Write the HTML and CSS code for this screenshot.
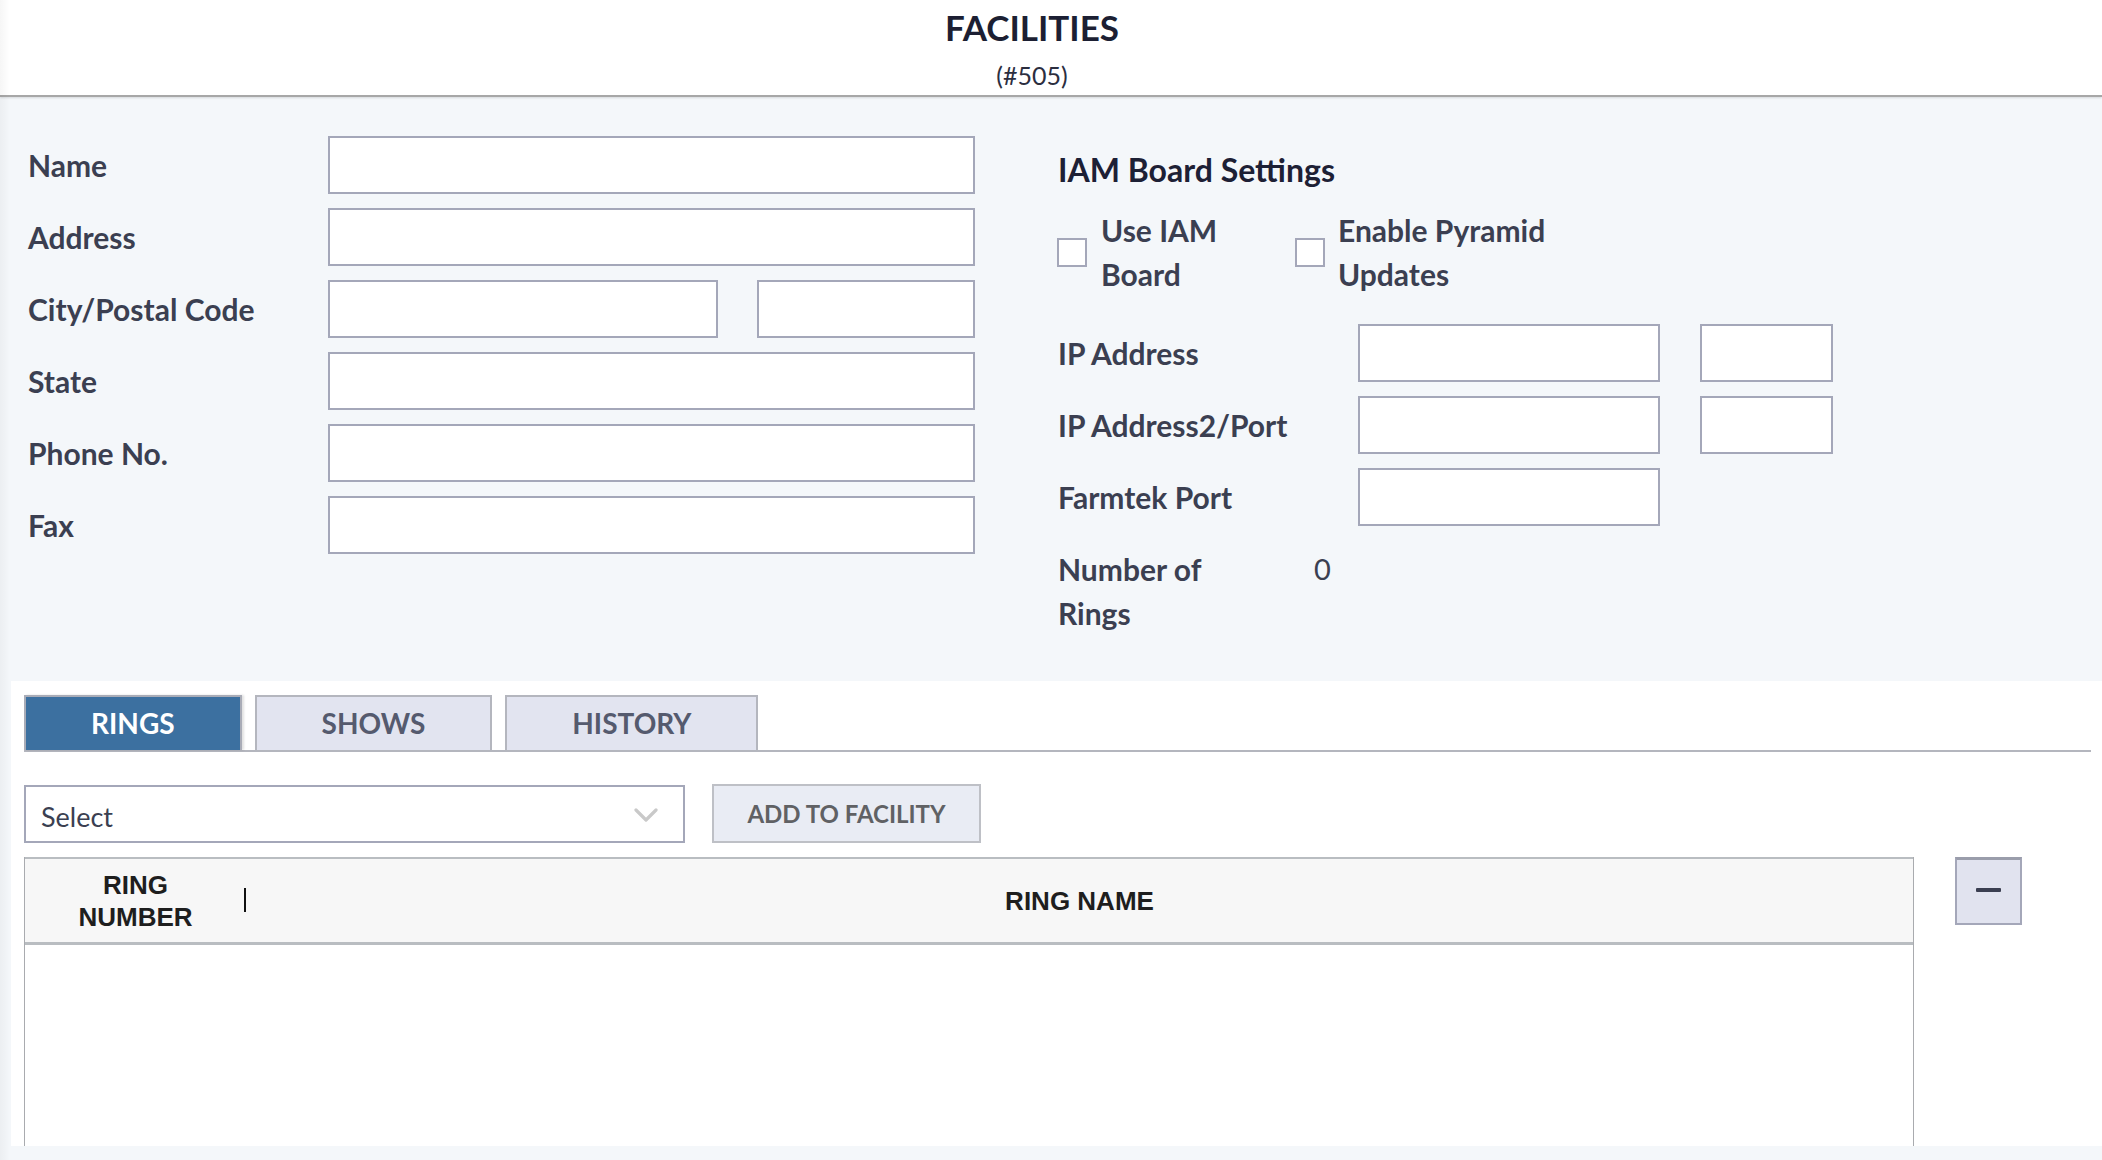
FILE: index.html
```html
<!DOCTYPE html>
<html lang="en">
<head>
<meta charset="utf-8">
<title>Facilities</title>
<link rel="stylesheet" href="styles.css">
</head>
<body>
<header class="page-head">
  <h1 class="page-title">FACILITIES</h1>
  <div class="page-sub">(#505)</div>
</header>

<section class="info">
  <div class="col-left">
    <div class="frow"><label class="flabel">Name</label><input class="fin fin-wide" type="text"></div>
    <div class="frow"><label class="flabel">Address</label><input class="fin fin-wide" type="text"></div>
    <div class="frow"><label class="flabel">City/Postal Code</label><input class="fin fin-city" type="text"><input class="fin fin-postal" type="text"></div>
    <div class="frow"><label class="flabel">State</label><input class="fin fin-wide" type="text"></div>
    <div class="frow"><label class="flabel">Phone No.</label><input class="fin fin-wide" type="text"></div>
    <div class="frow"><label class="flabel">Fax</label><input class="fin fin-wide" type="text"></div>
  </div>

  <div class="col-right">
    <h2 class="sect-title">IAM Board Settings</h2>
    <div class="checks">
      <div class="check"><span class="cbox"></span><span class="ctext ctext-a">Use IAM Board</span></div>
      <div class="check"><span class="cbox"></span><span class="ctext ctext-b">Enable Pyramid Updates</span></div>
    </div>
    <div class="rrows">
      <div class="frow"><label class="flabel">IP Address</label><input class="fin fin-ip" type="text"><input class="fin fin-port" type="text"></div>
      <div class="frow"><label class="flabel">IP Address2/Port</label><input class="fin fin-ip" type="text"><input class="fin fin-port" type="text"></div>
      <div class="frow"><label class="flabel">Farmtek Port</label><input class="fin fin-ip" type="text"></div>
    </div>
    <div class="numrow"><span class="numlabel">Number of Rings</span><span class="numval">0</span></div>
  </div>
</section>

<section class="panel">
  <nav class="tabs">
    <div class="tab tab-active">RINGS</div>
    <div class="tab">SHOWS</div>
    <div class="tab">HISTORY</div>
  </nav>

  <div class="toolbar">
    <div class="select">
      <span class="select-text">Select</span>
      <svg class="chev" width="24" height="15" viewBox="0 0 24 15"><polyline points="2,2 12,12 22,2" fill="none" stroke="#c9c9c9" stroke-width="3.2" stroke-linecap="round" stroke-linejoin="round"/></svg>
    </div>
    <button class="btn-add">ADD TO FACILITY</button>
  </div>

  <div class="table-wrap">
    <div class="grid">
      <div class="grid-head">
        <div class="th th-num">RING<br>NUMBER<span class="resizer"></span></div>
        <div class="th th-name">RING NAME</div>
      </div>
      <div class="grid-body"></div>
    </div>
    <button class="btn-minus" aria-label="Remove"><span class="minus"></span></button>
  </div>
</section>
</body>
</html>
```

FILE: styles.css
```css
* { box-sizing: border-box; }

html, body {
  margin: 0;
  padding: 0;
}

body {
  width: 2102px;
  height: 1160px;
  overflow: hidden;
  background: #f4f7fa;
  font-family: "Lato", "Noto Sans", sans-serif;
  color: #3b3f51;
  position: relative;
}

body::before {
  content: "";
  position: absolute;
  left: 0;
  top: 0;
  width: 10px;
  height: 100%;
  background: linear-gradient(to right, rgba(0,0,0,0.035), rgba(0,0,0,0));
  pointer-events: none;
  z-index: 5;
}

/* header */
.page-head {
  background: #ffffff;
  height: 97px;
  padding: 6px 38px 0 0;
  text-align: center;
  border-bottom: 2px solid #a7a7a7;
  box-shadow: 0 1px 2px rgba(0,0,0,0.12);
  position: relative;
  z-index: 2;
}

.page-title {
  margin: 0;
  font-size: 35px;
  line-height: 42px;
  font-weight: 700;
  color: #1c1f33;
}

.page-sub {
  margin-top: 12px;
  font-size: 25px;
  line-height: 30px;
  color: #2b2e3f;
}

/* info section */
.info {
  display: flex;
  padding: 39px 0 46px 28px;
  height: 584px;
}

.col-left {
  width: 947px;
  display: flex;
  flex-direction: column;
  gap: 14px;
}

.col-right {
  margin-left: 83px;
  padding-top: 16px;
  display: flex;
  flex-direction: column;
}

.frow {
  display: flex;
  align-items: center;
  height: 58px;
}

.flabel {
  width: 300px;
  flex: none;
  font-size: 30px;
  font-weight: 700;
  color: #3b3f51;
  line-height: 36px;
}

.fin {
  height: 58px;
  border: 2px solid #a4a7b9;
  background: #ffffff;
  padding: 0 12px;
  font-family: inherit;
  font-size: 26px;
  outline: none;
  border-radius: 0;
}

.fin-wide { width: 647px; }
.fin-city { width: 390px; }
.fin-postal { width: 218px; margin-left: 39px; }
.fin-ip { width: 302px; }
.fin-port { width: 133px; margin-left: 40px; }

.sect-title {
  margin: 0;
  font-size: 32px;
  line-height: 36px;
  font-weight: 700;
  color: #1d2035;
}

.checks {
  display: flex;
  margin-top: 20px;
  margin-left: -1px;
}

.check {
  display: flex;
  align-items: center;
}

.check:first-child { width: 238px; }

.cbox {
  width: 30px;
  height: 29px;
  border: 2px solid #a4a7b9;
  background: #ffffff;
  flex: none;
  margin-right: 14px;
}

.check:nth-child(2) .cbox { margin-right: 13px; }

.ctext {
  font-size: 30px;
  line-height: 44px;
  font-weight: 700;
  color: #3b3f51;
}

.ctext-a { width: 160px; }
.ctext-b { width: 240px; }

.rrows {
  margin-top: 28px;
  display: flex;
  flex-direction: column;
  gap: 14px;
}

.numrow {
  margin-top: 21px;
  display: flex;
  align-items: flex-start;
}

.numlabel {
  width: 200px;
  margin-right: 56px;
  font-size: 30px;
  line-height: 44px;
  font-weight: 700;
  color: #3b3f51;
}

.numval {
  font-size: 29px;
  line-height: 44px;
  color: #3b3f51;
}

/* lower panel */
.panel {
  margin-left: 11px;
  height: 465px;
  background: #ffffff;
  padding: 14px 11px 0 13px;
  overflow: hidden;
  display: flex;
  flex-direction: column;
}

.tabs {
  display: flex;
  gap: 13px;
  border-bottom: 2px solid #b4b6be;
  height: 57px;
}

.tab {
  height: 55px;
  padding: 0 65px;
  border: 2px solid #b4b6be;
  border-bottom: none;
  background: #e2e4f0;
  color: #555a6e;
  font-size: 28px;
  font-weight: 700;
  line-height: 53px;
  text-align: center;
}

.tab-active {
  background: #3c70a0;
  color: #ffffff;
  border-color: #a9acb7;
  box-shadow: 2px 0 2px rgba(0,0,0,0.12);
}

.toolbar {
  display: flex;
  align-items: flex-start;
  gap: 27px;
  margin-top: 33px;
}

.select {
  width: 661px;
  height: 58px;
  border: 2px solid #a4a7b9;
  background: #ffffff;
  display: flex;
  align-items: center;
  justify-content: space-between;
  padding: 0 25px 0 15px;
}

.select-text {
  font-size: 27px;
  color: #3b3f51;
  margin-top: 4px;
}

.chev { display: block; margin-top: 2px; }

.btn-add {
  width: 269px;
  height: 59px;
  border: 2px solid #bec0c6;
  background: #e9ecf4;
  color: #606164;
  font-family: inherit;
  font-size: 24px;
  font-weight: 700;
  padding: 0;
  margin-top: -1px;
}

.table-wrap {
  display: flex;
  align-items: flex-start;
  margin-top: 14px;
  flex: 1;
}

.grid {
  width: 1890px;
  height: 300px;
  display: flex;
  flex-direction: column;
  border-left: 1px solid #a9abaf;
  border-right: 1px solid #a9abaf;
}

.grid-head {
  display: flex;
  height: 88px;
  background: #f7f7f7;
  border-top: 2px solid #b9bdc1;
  border-bottom: 3px solid #b9bdc1;
}

.th {
  display: flex;
  align-items: center;
  justify-content: center;
  text-align: center;
  font-family: "Liberation Sans", Arial, sans-serif;
  font-size: 26px;
  line-height: 32px;
  font-weight: 700;
  color: #1e1e1e;
}

.th-num {
  width: 221px;
  position: relative;
}

.resizer {
  position: absolute;
  right: 0;
  top: 29px;
  width: 2px;
  height: 24px;
  background: #111111;
}

.th-name { flex: 1; }

.grid-body {
  flex: 1;
  background: #ffffff;
}

.btn-minus {
  margin-left: 41px;
  width: 67px;
  height: 68px;
  background: #e1e3ef;
  border: 2px solid #a4a7b9;
  border-top: 3px solid #9a9dab;
  display: flex;
  align-items: center;
  justify-content: center;
  padding: 0;
}

.minus {
  width: 25px;
  height: 4px;
  background: #3b3f51;
  border-radius: 1px;
  margin-top: -4px;
}
```
